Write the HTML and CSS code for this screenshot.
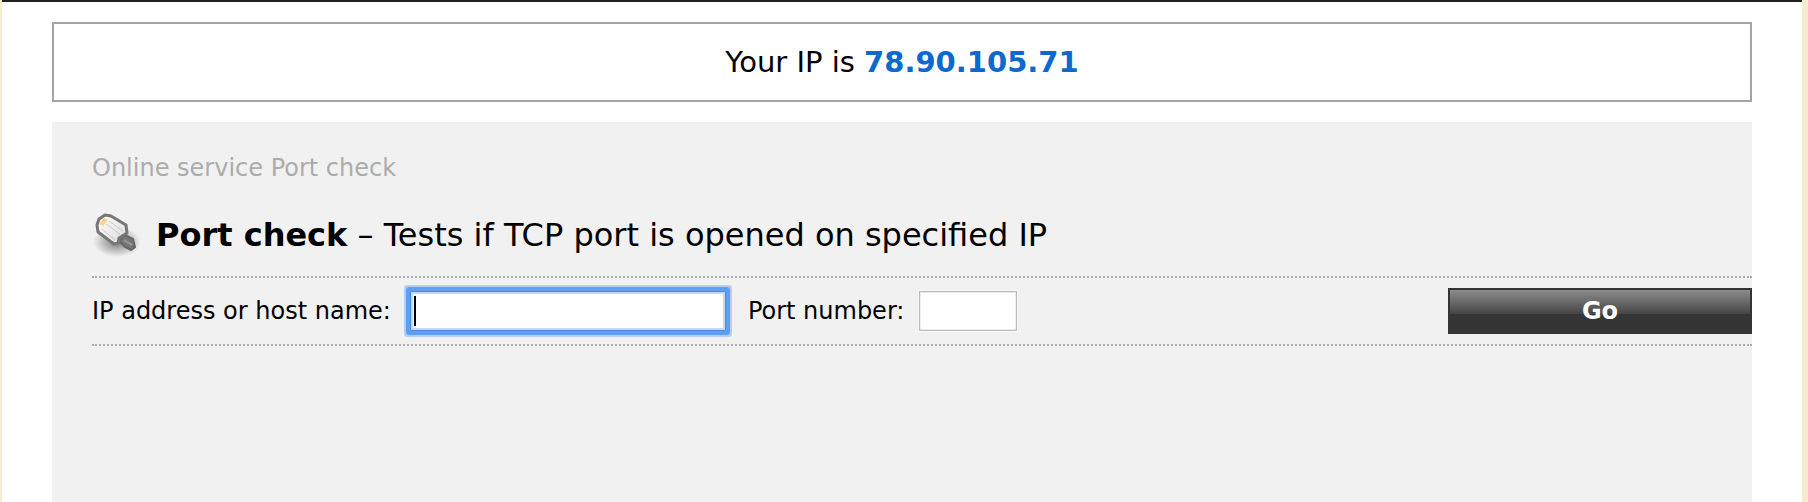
FILE: index.html
```html
<!DOCTYPE html>
<html lang="en">
<head>
    <meta charset="utf-8">
    <link rel="stylesheet" href="styles.css">
    <title>Port check</title>
</head>
<body>
    <div class="page">
        <div class="your-ip">Your IP is <b>78.90.105.71</b></div>
        <div class="panel">
            <p class="crumb">Online service Port check</p>
            <h1>
                <svg class="plug" viewBox="0 0 48 48" aria-hidden="true">
                    <defs>
                        <radialGradient id="shade">
                            <stop offset="0" stop-color="#000" stop-opacity=".5"/>
                            <stop offset="1" stop-color="#000" stop-opacity="0"/>
                        </radialGradient>
                        <linearGradient id="body" x1="0" y1="0" x2="1" y2="1">
                            <stop offset="0" stop-color="#fff"/>
                            <stop offset="1" stop-color="#dadada"/>
                        </linearGradient>
                    </defs>
                    <ellipse cx="25" cy="31" rx="24" ry="15" fill="url(#shade)"/>
                    <!-- cable -->
                    <path d="M27 30l6-6 8 4 2 8-4 3-6-3z" fill="#777" stroke="#666" stroke-width="2"/>
                    <path d="M32 29l8 5" stroke="#999" stroke-width="2"/>
                    <!-- connector -->
                    <path d="M5 14l2-6 6-4 6 1 15 9 1 8-8 5-1 5-4 1L6 21z" fill="url(#body)" stroke="#777" stroke-width="3" stroke-linejoin="round"/>
                    <path d="M7 13l5-6 4 2-5 6z" fill="#fbd38a"/>
                    <path d="M17 10l14 10M14 13l14 10M10 18l13 11" stroke="#c8c8c8"/>
                </svg>
                <span><b>Port check</b> – Tests if TCP port is opened on specified IP</span>
            </h1>
            <form class="check">
                <label for="host">IP address or host name:</label>
                <input type="text" id="host" class="host">
                <label for="port">Port number:</label>
                <input type="text" id="port" class="port">
                <button type="submit">Go</button>
            </form>
        </div>
    </div>
</body>
</html>
```
FILE: styles.css
```css
*{
    box-sizing: border-box;
}
body{
    margin: 0;
    background: #f6edcf;
    font-family: Verdana, "DejaVu Sans", sans-serif;
    font-size: 24px;
    line-height: 28px;
    color: #000;
}
.page{
    display: flex;
    flex-direction: column;
    min-height: 100vh;
    margin: 0 6px 0 2px;
    padding: 20px 50px 0;
    border-top: 2px solid #211f20;
    background: #fff;
}
.your-ip{
    padding: 20px;
    border: 2px solid #a5a5a5;
    font-size: 29px;
    line-height: 36px;
    text-align: center;
}
.your-ip b{
    color: #0c69cf;
}
.panel{
    flex: 1;
    margin-top: 20px;
    padding: 32px 0 0 40px;
    background: #f1f1f1;
}
.crumb{
    margin: 0;
    color: #acacac;
}
h1{
    display: flex;
    align-items: center;
    gap: 16px;
    margin: 29px 0 17px;
    font-size: 32px;
    font-weight: normal;
    line-height: 48px;
}
.plug{
    width: 48px;
    height: 48px;
}
.check{
    display: flex;
    align-items: center;
    padding: 10px 0;
    border-top: 2px dotted #a9a9a9;
    border-bottom: 2px dotted #a9a9a9;
}
input{
    height: 40px;
    border: 1px solid #b9b9b9;
    background: #fff;
    font: inherit;
}
.host{
    width: 316px;
    margin: 0 22px 0 19px;
    border: 1px solid #4a8ade;
    outline: none;
    /* focus ring and text cursor */
    box-shadow: 0 0 0 4px #5e9ff2, 0 0 0 6px #b3d0f2, inset 0 0 0 2px #bed9fa;
    border-radius: 1px;
    background: linear-gradient(#000, #000) 3px center / 2px 30px no-repeat #fff;
}
.port{
    width: 98px;
    margin-left: 15px;
    box-shadow: 0 0 0 1px #fafafa, inset 0 0 0 1px #eee;
}
button{
    width: 304px;
    height: 46px;
    margin-left: auto;
    border: 2px solid #353535;
    background: linear-gradient(#8c8c8c, #454545 24px, #353535 24px);
    font: inherit;
    font-weight: bold;
    color: #fff;
}
```
